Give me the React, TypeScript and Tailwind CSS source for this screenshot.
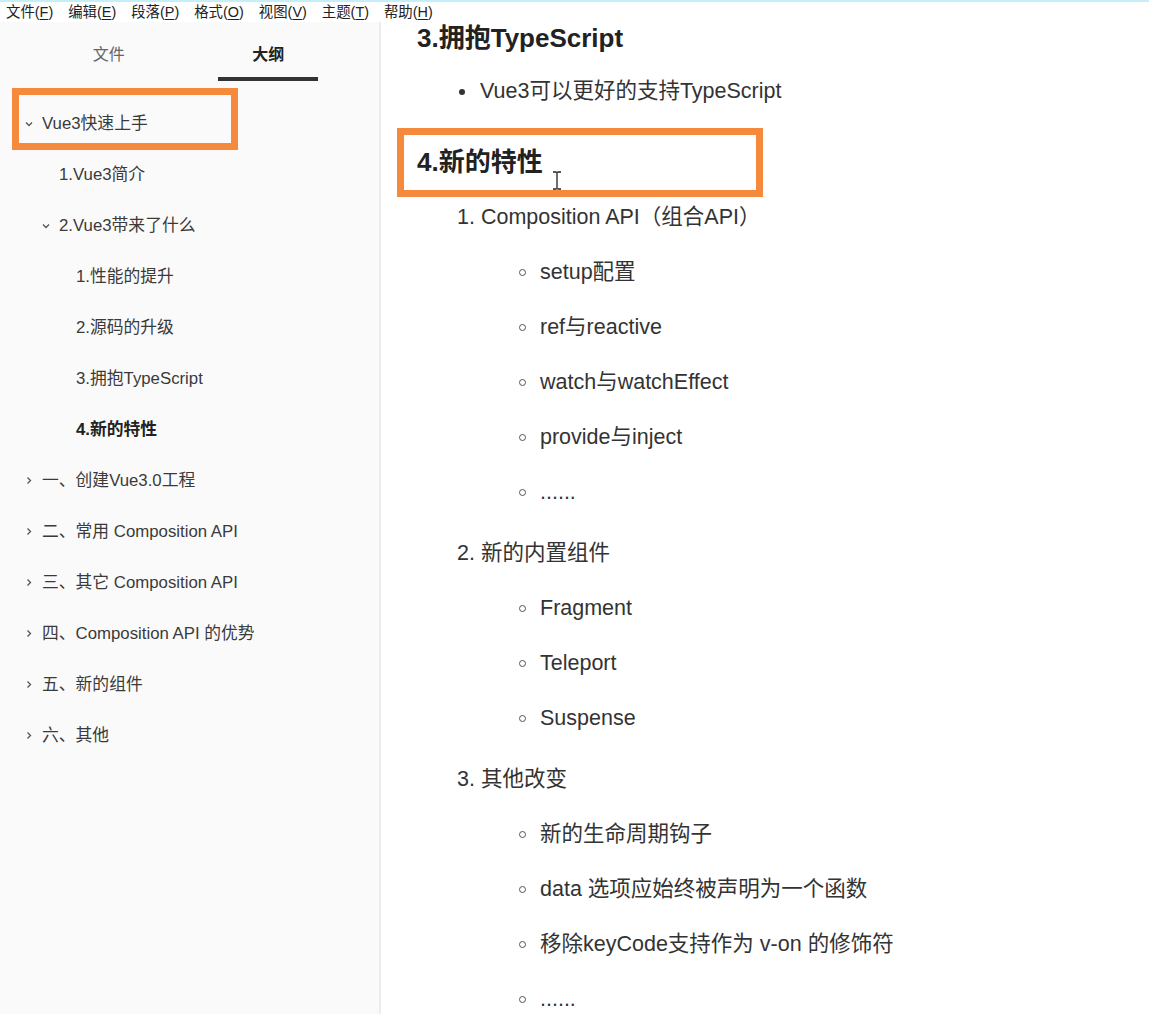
import React from "react";

const FONT = {
  fontFamily: '"Liberation Sans", Arial, "Noto Sans CJK SC", sans-serif',
};

function Chevron({ open }: { open: boolean }) {
  return (
    <svg width="18" height="12" viewBox="0 0 18 12" className="shrink-0">
      {open ? (
        <path d="M2 4.5 L5 7.5 L8 4.5" fill="none" stroke="#555" strokeWidth="1.3" />
      ) : (
        <path d="M3.5 2.5 L6.5 5.5 L3.5 8.5" fill="none" stroke="#555" strokeWidth="1.3" />
      )}
    </svg>
  );
}

type Item = { text: string; level: number; chevron?: "open" | "closed"; bold?: boolean; boxed?: boolean };

const outline: Item[] = [
  { text: "Vue3快速上手", level: 0, chevron: "open", boxed: true },
  { text: "1.Vue3简介", level: 1 },
  { text: "2.Vue3带来了什么", level: 1, chevron: "open" },
  { text: "1.性能的提升", level: 2 },
  { text: "2.源码的升级", level: 2 },
  { text: "3.拥抱TypeScript", level: 2 },
  { text: "4.新的特性", level: 2, bold: true },
  { text: "一、创建Vue3.0工程", level: 0, chevron: "closed" },
  { text: "二、常用 Composition API", level: 0, chevron: "closed" },
  { text: "三、其它 Composition API", level: 0, chevron: "closed" },
  { text: "四、Composition API 的优势", level: 0, chevron: "closed" },
  { text: "五、新的组件", level: 0, chevron: "closed" },
  { text: "六、其他", level: 0, chevron: "closed" },
];

const padByLevel = ["pl-[24px]", "pl-[41px]", "pl-[58px]"];

function Menu({ label, k }: { label: string; k: string }) {
  return (
    <span className="whitespace-nowrap">
      {label}(<span className="underline underline-offset-2">{k}</span>)
    </span>
  );
}

function Sub({ children }: { children: React.ReactNode }) {
  return (
    <li className="h-[55px] flex items-center pl-[138px]">
      <span className="w-[7px] h-[7px] rounded-full border-[1.5px] border-[#555] mr-[14px] shrink-0" />
      <span>{children}</span>
    </li>
  );
}

export default function App() {
  return (
    <div className="w-[1149px] h-[1014px] overflow-hidden bg-white flex flex-col text-[#333]" style={FONT}>
      {/* Menu bar */}
      <div className="h-[22px] shrink-0 border-t-2 border-[#c4eef8] bg-white flex items-center gap-[15px] px-[6px] text-[14.4px] leading-none text-[#222]">
        <Menu label="文件" k="F" />
        <Menu label="编辑" k="E" />
        <Menu label="段落" k="P" />
        <Menu label="格式" k="O" />
        <Menu label="视图" k="V" />
        <Menu label="主题" k="T" />
        <Menu label="帮助" k="H" />
      </div>

      <div className="flex flex-1 min-h-0">
        {/* Sidebar */}
        <aside className="w-[381px] shrink-0 bg-[#fafafa] border-r-2 border-[#ececec] flex flex-col">
          <div className="h-[60px] flex pl-[29px] pr-[31px]">
            <div className="w-[160px] flex flex-col items-center">
              <div className="mt-[22px] h-[22px] leading-[22px] text-[16px] text-[#666]">文件</div>
            </div>
            <div className="w-[160px] flex flex-col items-center">
              <div className="mt-[22px] h-[22px] leading-[22px] text-[16px] font-bold text-[#222]">大纲</div>
              <div className="mt-[11px] w-[100px] h-[4px] bg-[#333]" />
            </div>
          </div>
          <ul className="pt-[16px]">
            {outline.map((it, i) => (
              <li
                key={i}
                className={`relative h-[51px] flex items-center text-[16.8px] ${padByLevel[it.level]} ${
                  it.bold ? "font-bold text-[#222]" : "text-[#3a3a3a]"
                }`}
              >
                {it.chevron ? <Chevron open={it.chevron === "open"} /> : <span className="w-[18px] shrink-0" />}
                <span className="whitespace-nowrap">{it.text}</span>
                {it.boxed && (
                  <div className="absolute left-[12px] top-[-10px] w-[226px] h-[62px] border-[7px] border-[#f68a3c]" />
                )}
              </li>
            ))}
          </ul>
        </aside>

        {/* Main */}
        <main className="flex-1 bg-white text-[21.5px] text-[#333]">
          <h3 className="h-[32px] flex items-center pl-[36px] text-[26px] font-bold text-[#222]">3.拥抱TypeScript</h3>
          <ul className="mt-[10px]">
            <li className="h-[55px] flex items-center pl-[78px]">
              <span className="w-[6px] h-[6px] rounded-full bg-[#333] mr-[15px] shrink-0" />
              <span>Vue3可以更好的支持TypeScript</span>
            </li>
          </ul>
          <div className="relative mt-[16px] h-[55px] flex items-center pl-[36px]">
            <h4 className="text-[26px] font-bold text-[#222]">4.新的特性</h4>
            <svg className="absolute left-[171px] top-[36px]" width="10" height="19" viewBox="0 0 10 19">
              <path d="M1 1 H4 M6 1 H9 M5 1.5 V17.5 M1 18 H4 M6 18 H9 M4 1 Q5 1.5 6 1 M4 18 Q5 17.5 6 18" fill="none" stroke="#222" strokeWidth="1.3" />
            </svg>
            <div className="absolute left-[16px] top-[-7px] w-[366px] h-[69px] border-[7px] border-[#f68a3c]" />
          </div>
          <ol>
            <li>
              <div className="h-[55px] flex items-center pl-[76px]">1. Composition API（组合API）</div>
              <ul>
                <Sub>setup配置</Sub>
                <Sub>ref与reactive</Sub>
                <Sub>watch与watchEffect</Sub>
                <Sub>provide与inject</Sub>
                <Sub>......</Sub>
              </ul>
            </li>
            <li className="mt-[6px]">
              <div className="h-[55px] flex items-center pl-[76px]">2. 新的内置组件</div>
              <ul>
                <Sub>Fragment</Sub>
                <Sub>Teleport</Sub>
                <Sub>Suspense</Sub>
              </ul>
            </li>
            <li className="mt-[6px]">
              <div className="h-[55px] flex items-center pl-[76px]">3. 其他改变</div>
              <ul>
                <Sub>新的生命周期钩子</Sub>
                <Sub>data 选项应始终被声明为一个函数</Sub>
                <Sub>移除keyCode支持作为 v-on 的修饰符</Sub>
                <Sub>......</Sub>
              </ul>
            </li>
          </ol>
        </main>
      </div>
    </div>
  );
}
